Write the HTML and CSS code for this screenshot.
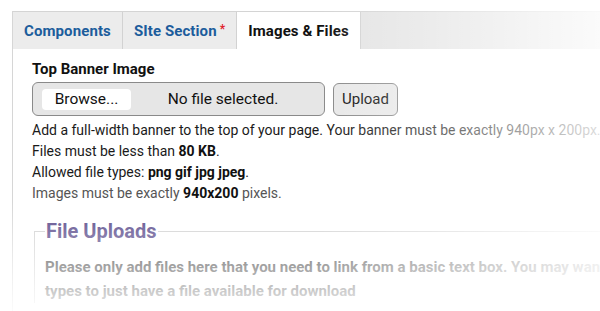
FILE: index.html
```html
<!DOCTYPE html>
<html lang="en">
<head>
    <meta charset="UTF-8">
    <title>Images &amp; Files</title>
    <link rel="stylesheet" href="styles.css">
</head>
<body>
    <div class="panel">
        <nav class="tabs">
            <a class="tab">Components</a>
            <a class="tab">SIte Section <span class="req">*</span></a>
            <a class="tab active">Images &amp; Files</a>
        </nav>

        <div class="tab-body">
            <h3 class="field-title">Top Banner Image</h3>
            <div class="upload-row">
                <div class="file-input">
                    <span class="browse">Browse...</span>
                    <span class="file-name">No file selected.</span>
                </div>
                <button class="upload-btn">Upload</button>
            </div>
            <p class="help">Add a full-width banner to the top of your page. Your banner must be exactly 940px x 200px.</p>
            <p class="help">Files must be less than <b>80 KB</b>.</p>
            <p class="help">Allowed file types: <b>png gif jpg jpeg</b>.</p>
            <p class="help muted">Images must be exactly <b>940x200</b> pixels.</p>

            <fieldset class="uploads">
                <legend>File Uploads</legend>
                <p>Please only add files here that you need to link from a basic text box. You may want to use other content<br>types to just have a file available for download</p>
            </fieldset>
        </div>
    </div>

    <!-- screenshot fades out at the right and bottom edges -->
    <div class="fade-right"></div>
    <div class="fade-bottom"></div>
</body>
</html>
```

FILE: styles.css
```css
* {
    margin: 0;
    padding: 0;
    box-sizing: border-box;
}

body {
    font-family: Roboto, 'Liberation Sans', sans-serif;
    color: #1a1a1a;
    background: #fff;
    padding: 11px 0 0 12px;
    width: 600px;
    height: 311px;
    overflow: hidden;
    position: relative;
}

.panel {
    border-left: 1px solid #d6d6d6;
    height: 300px;
    overflow: hidden;
}

.tabs {
    display: flex;
    height: 38px;
    background: #e4e4e4;
    border-top: 1px solid #d4d4d4;
}

.tab {
    display: flex;
    align-items: center;
    padding: 0 11px;
    font-size: 15px;
    font-weight: 700;
    letter-spacing: 0.1px;
    color: #1c5d9c;
    background: #ececec;
    border-right: 1px solid #d2d2d2;
    white-space: nowrap;
}

.tab .req {
    color: #e0202a;
    font-size: 12px;
    margin-left: 3px;
    align-self: flex-start;
    margin-top: 10px;
}

.tab.active {
    background: #fff;
    color: #111;
}

.tab-body {
    padding: 11px 19px 0;
}

.field-title {
    font-size: 15px;
    font-weight: 700;
    color: #111;
    margin-bottom: 4px;
}

.upload-row {
    display: flex;
    align-items: center;
    gap: 8px;
    margin-bottom: 4px;
}

.file-input {
    display: flex;
    align-items: center;
    width: 293px;
    height: 34px;
    background: #e6e6e6;
    border: 1px solid #8a8a8a;
    border-radius: 6px;
    padding: 0 9px;
    font-size: 15.5px;
}

.browse {
    background: #fff;
    border-radius: 4px;
    width: 89px;
    height: 21px;
    display: flex;
    align-items: center;
    justify-content: center;
    color: #111;
}

.file-name {
    flex: 1;
    text-align: center;
    color: #111;
}

.upload-btn {
    font-family: inherit;
    font-size: 15px;
    color: #111;
    background: #e8e8e8;
    border: 1px solid #8a8a8a;
    border-radius: 6px;
    height: 33px;
    padding: 0 8px;
}

.help {
    font-size: 14px;
    line-height: 21px;
    white-space: nowrap;
    color: #1a1a1a;
}

.help.muted {
    color: #555;
}

.help b {
    color: #111;
}

.uploads {
    margin-top: 15px;
    margin-left: 2px;
    border: 1px solid #cfcfcf;
    border-right: none;
    border-bottom: none;
    padding: 12px 10px 0;
}

.uploads legend {
    font-size: 20px;
    font-weight: 700;
    color: #4f3f84;
    padding: 0 1px;
}

.uploads p {
    font-size: 15px;
    font-weight: 700;
    line-height: 24px;
    color: #2e2e2e;
    white-space: nowrap;
}

.fade-right {
    position: absolute;
    top: 0;
    right: 0;
    width: 280px;
    height: 100%;
    background: linear-gradient(to right, rgba(255,255,255,0) 0%, rgba(255,255,255,0.3) 40%, rgba(255,255,255,0.85) 100%);
    pointer-events: none;
}

.fade-bottom {
    position: absolute;
    left: 0;
    bottom: 0;
    width: 100%;
    height: 110px;
    background: linear-gradient(to bottom, rgba(255,255,255,0) 0%, rgba(255,255,255,0.3) 30%, rgba(255,255,255,0.9) 100%);
    pointer-events: none;
}
```
